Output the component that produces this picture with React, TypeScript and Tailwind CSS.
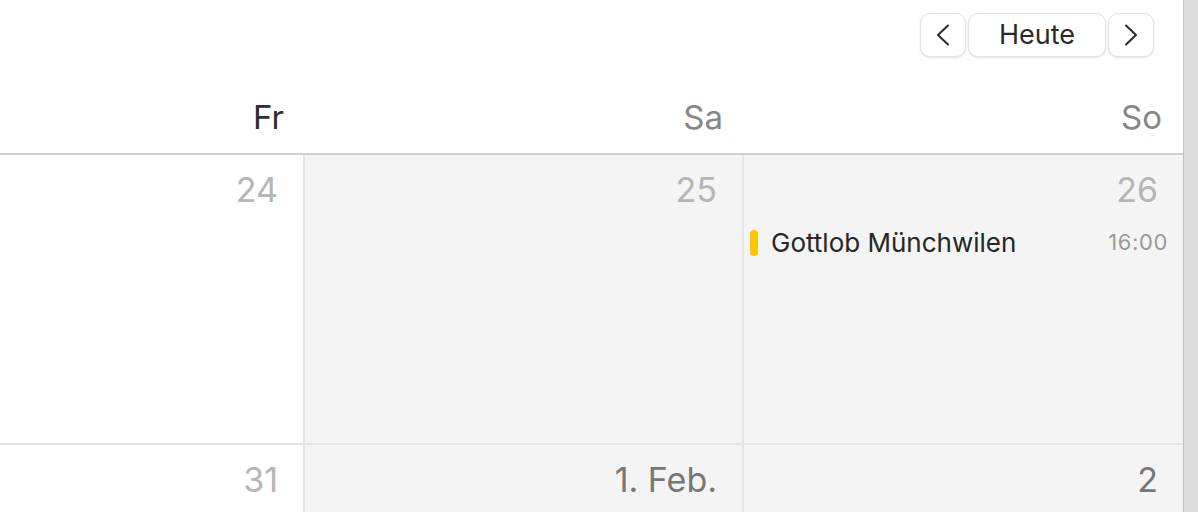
const font = { fontFamily: "Inter, 'Noto Sans', sans-serif" };

interface DayCell {
  label: string;
  weekend: boolean;
  current: boolean;
  events?: { title: string; time: string }[];
}

const days = [
  { name: "Fr", weekend: false },
  { name: "Sa", weekend: true },
  { name: "So", weekend: true },
];

const weeks: DayCell[][] = [
  [
    { label: "24", weekend: false, current: false },
    { label: "25", weekend: true, current: false },
    {
      label: "26",
      weekend: true,
      current: false,
      events: [{ title: "Gottlob Münchwilen", time: "16:00" }],
    },
  ],
  [
    { label: "31", weekend: false, current: false },
    { label: "1. Feb.", weekend: true, current: true },
    { label: "2", weekend: true, current: true },
  ],
];

const colWidths = ["w-[305px]", "w-[439px]", "w-[439px]"];

function Chevron({ dir }: { dir: "left" | "right" }) {
  return (
    <svg width="16" height="22" viewBox="0 0 16 22" fill="none">
      <polyline
        points={dir === "left" ? "13,1.5 3,11 13,20.5" : "3,1.5 13,11 3,20.5"}
        stroke="#2a2a2a"
        strokeWidth="2"
        strokeLinecap="round"
        strokeLinejoin="round"
      />
    </svg>
  );
}

function NavButton({ children, wide }: { children: React.ReactNode; wide?: boolean }) {
  return (
    <button
      className={`h-[44px] ${wide ? "w-[138px]" : "w-[46px]"} flex items-center justify-center rounded-[10px] bg-white border border-[#e2e2e2] shadow-[0_1px_2px_rgba(0,0,0,0.12)] text-[27px] text-[#2a2a2a]`}
    >
      {children}
    </button>
  );
}

export default function App() {
  return (
    <div className="w-[1198px] h-[512px] flex overflow-hidden bg-white" style={font}>
      <div className="w-[1183px] flex flex-col">
        {/* toolbar + weekday names */}
        <div className="h-[155px] border-b-2 border-[#d0d0d0] flex flex-col">
          <div className="flex justify-end gap-[2px] pt-[13px] pr-[29px]">
            <NavButton>
              <Chevron dir="left" />
            </NavButton>
            <NavButton wide>Heute</NavButton>
            <NavButton>
              <Chevron dir="right" />
            </NavButton>
          </div>
          <div className="flex mt-[44px]">
            {days.map((d, i) => (
              <div
                key={d.name}
                className={`${colWidths[i]} pr-[21px] text-right text-[33px] leading-none ${
                  d.weekend ? "text-[#868686]" : "text-[#2e2e2e]"
                }`}
              >
                {d.name}
              </div>
            ))}
          </div>
        </div>

        {/* month grid */}
        <div className="flex-1 flex flex-col">
          {weeks.map((week, wi) => (
            <div
              key={wi}
              className={`flex ${wi === 0 ? "h-[290px] border-b-2 border-[#e4e4e4]" : "flex-1"}`}
            >
              {week.map((cell, ci) => (
                <div
                  key={cell.label}
                  className={`${colWidths[ci]} ${
                    ci < 2 ? "border-r-2 border-[#e4e4e4]" : ""
                  } ${cell.weekend ? "bg-[#f4f4f4]" : "bg-white"} flex flex-col`}
                >
                  <div
                    className={`pt-[18px] pr-[25px] text-right text-[34px] leading-none ${
                      cell.current ? "text-[#777777]" : "text-[#b5b5b5]"
                    }`}
                  >
                    {cell.label}
                  </div>
                  {cell.events?.map((ev) => (
                    <div key={ev.title} className="flex items-center mt-[16px] pl-[6px] pr-[15px]">
                      <span className="w-[8px] h-[26px] rounded-full bg-[#fcc600]" />
                      <span className="ml-[13px] flex-1 text-[26px] text-[#262626]">{ev.title}</span>
                      <span className="text-[22px] tracking-[0.6px] text-[#9a9a9a]">{ev.time}</span>
                    </div>
                  ))}
                </div>
              ))}
            </div>
          ))}
        </div>
      </div>
      {/* scrollbar track */}
      <div className="flex-1 bg-[#dcdcdc] border-l border-[#c4c4c4]" />
    </div>
  );
}
